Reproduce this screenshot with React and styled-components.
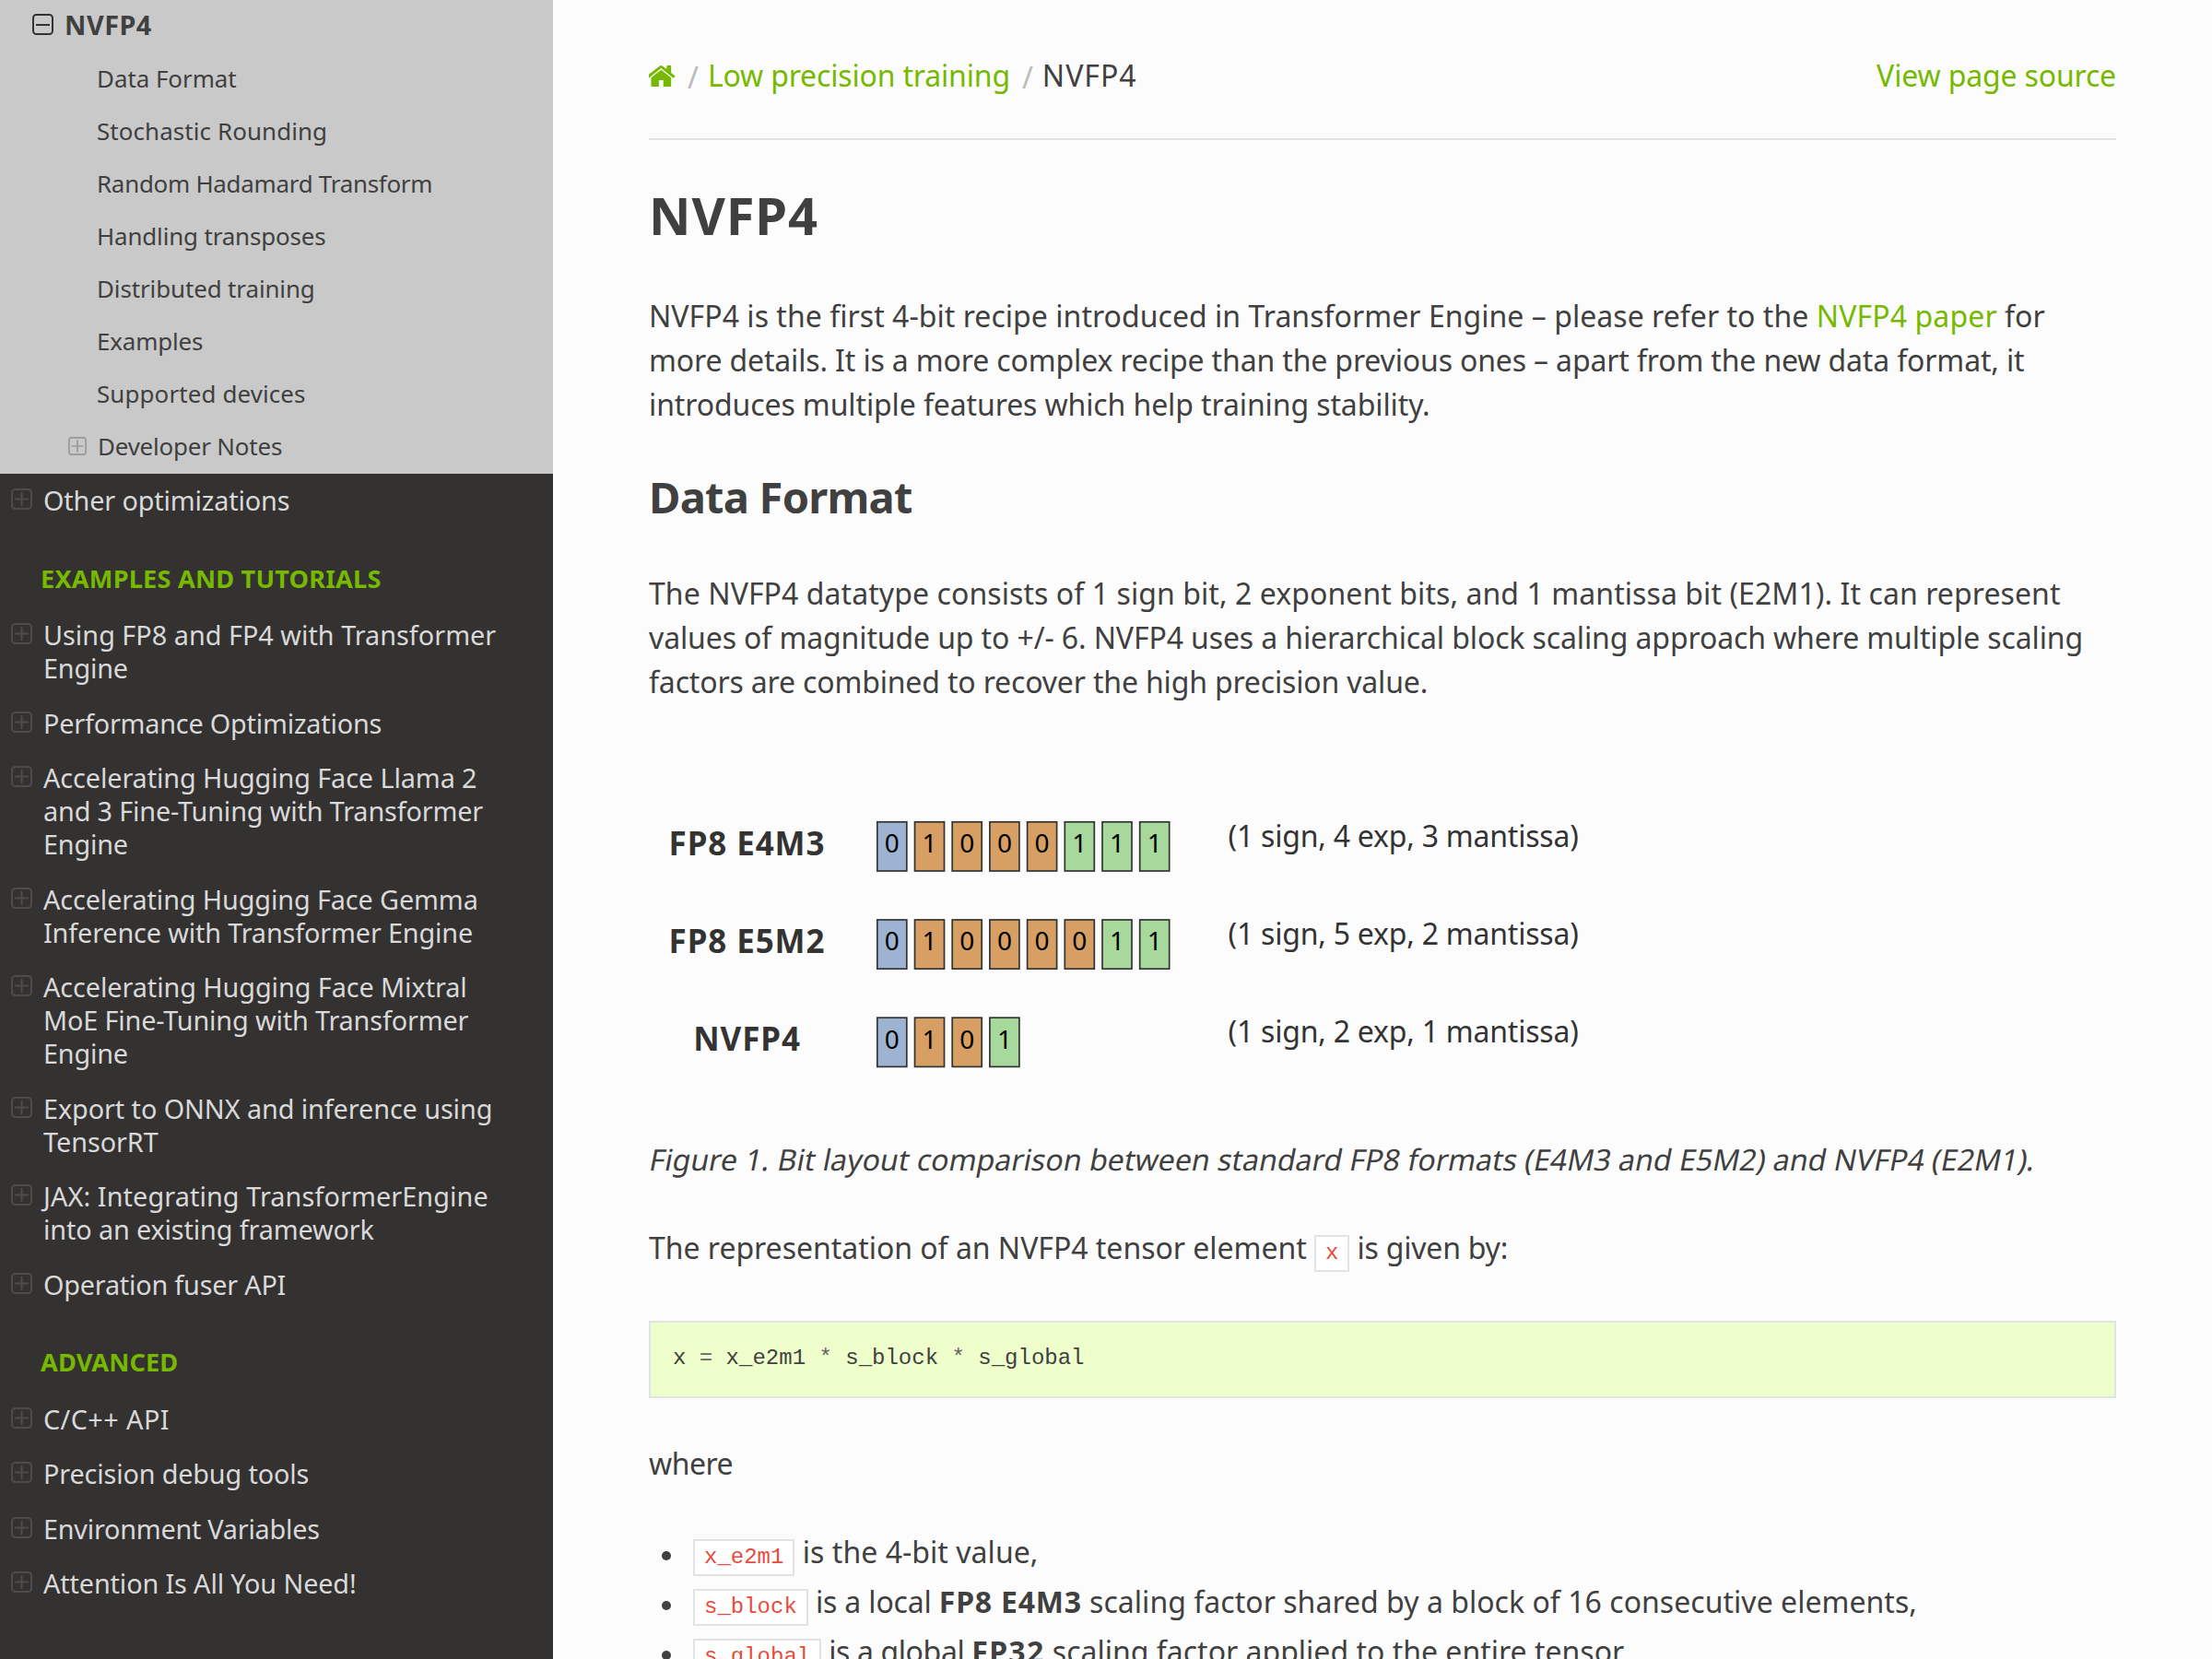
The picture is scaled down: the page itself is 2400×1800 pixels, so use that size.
import React from 'react'
import styled, { createGlobalStyle } from 'styled-components'

const GlobalStyle = createGlobalStyle`
    * {
        box-sizing: border-box;
    }
    body {
        margin: 0;
        background: #fcfcfc;
        color: #404040;
        font-family: 'Noto Sans', 'Liberation Sans', sans-serif;
        font-size: 32px;
        line-height: 48px;
    }
`

const Page = styled.div`
    display: flex;
    height: 1800px;
    overflow: hidden;
`

/* Sidebar */

const Sidebar = styled.nav`
    flex: none;
    width: 600px;
    background: #343131;
    color: #d9d9d9;
    font-size: 28.8px;
    line-height: 36px;
`
const CurrentSection = styled.div`
    background: #c9c9c9;
    color: #404040;
`
const MenuList = styled.ul`
    list-style: none;
    margin: 0;
    padding: 0;
`
const MenuItem = styled.li`
    display: flex;
    padding: 11.5px 0 12px 12px;
`
const CurrentItem = styled(MenuItem)`
    padding: 9.3px 0 12.9px 35px;
    font-weight: 700;
`
const SubItem = styled(MenuItem)`
    padding: 9px 0 11.97px ${(props) => (props.$expandable ? '74px' : '105px')};
    font-size: 25.92px;
`
const ToggleIcon = styled.svg`
    flex: none;
    width: ${(props) => props.$size}px;
    height: ${(props) => props.$size}px;
    margin: ${(props) => props.$top}px 12px 0 0;
    fill: none;
    stroke: ${(props) => props.$color};
    stroke-width: 2;
`
const MenuCaption = styled.p`
    margin: 22.3px 0 0;
    padding-left: 44px;
    color: #76b900;
    font-size: 27.2px;
    font-weight: 700;
    line-height: 64px;
    text-transform: uppercase;
`

const Line = styled.span`
    display: block;
    white-space: pre;
    letter-spacing: ${(props) => props.$ls || 0}px;
`
const Run = styled.span`
    white-space: pre;
    letter-spacing: ${(props) => props.$ls || 0}px;
`
const Bold = styled(Run)`
    font-weight: 700;
`
const Link = styled.a`
    color: #76b900;
    text-decoration: none;
    white-space: pre;
    letter-spacing: ${(props) => props.$ls || 0}px;
`

/* Content */

const Content = styled.main`
    flex: none;
    width: 1800px;
    padding: 58px 104px 0;
`
const Breadcrumbs = styled.div`
    display: flex;
    height: 94px;
    border-bottom: 2px solid #e1e4e5;
`
const HomeIcon = styled.svg`
    width: 29px;
    height: 23px;
    margin-top: 13px;
    fill: #76b900;
`
const Separator = styled.span`
    margin: 2px 10px 0 13px;
    color: #bbb;
`
const SourceLink = styled(Link)`
    margin-left: auto;
`
const Title = styled.h1`
    margin: 42.5px 0 0;
    font-size: 56px;
    line-height: 76px;
    letter-spacing: 0.9px;
`
const Heading = styled.h2`
    margin: 44.6px 0 0;
    font-size: 47px;
    line-height: 64px;
    letter-spacing: -0.75px;
`
const Paragraph = styled.p`
    margin: ${(props) => props.$top}px 0 0;
`
const Figure = styled.svg`
    display: block;
    width: 1592px;
    height: 320px;
    margin-top: 96.3px;
`
const Caption = styled.div`
    margin: 53.5px 0 0 -1px;
    transform: skewX(-11deg);
    transform-origin: 0 36px;
`
const Code = styled.code`
    padding: 4px 10px 5px;
    border: 2px solid #e1e4e5;
    background: #fff;
    color: #e74c3c;
    font-family: 'Liberation Mono', monospace;
    font-size: 24px;
`
const CodeBlock = styled.pre`
    height: 84px;
    margin: 48.5px 0 0;
    padding: 22px 24px;
    border: 2px solid #e1e4e5;
    background: #eeffcc;
    font-family: 'Liberation Mono', monospace;
    font-size: 24px;
    line-height: 34px;
`
const Operator = styled.span`
    color: #666;
`
const BulletList = styled.ul`
    list-style: none;
    margin: 45px 0 0;
    padding: 0;
`
const BulletItem = styled.li`
    display: flex;
    height: 54px;
    padding-top: 3px;
    white-space: pre;

    &::before {
        content: '';
        flex: none;
        width: 10px;
        height: 10px;
        margin: 23px 24px 0 14px;
        border-radius: 50%;
        background: #404040;
    }
`

const currentPages = [
    { text: 'Data Format', ls: -0.03 },
    { text: 'Stochastic Rounding', ls: 0.1 },
    { text: 'Random Hadamard Transform', ls: -0.26 },
    { text: 'Handling transposes', ls: -0.14 },
    { text: 'Distributed training', ls: -0.1 },
    { text: 'Examples', ls: -0.17 },
    { text: 'Supported devices', ls: 0.13 },
    { text: 'Developer Notes', ls: -0.18, expandable: true },
]

const otherPages = [[['Other optimizations', -0.15]]]

const tutorials = [
    [
        ['Using FP8 and FP4 with Transformer', 0.015],
        ['Engine', -0.2],
    ],
    [['Performance Optimizations', -0.2]],
    [
        ['Accelerating Hugging Face Llama 2', -0.095],
        ['and 3 Fine-Tuning with Transformer', -0.14],
        ['Engine', -0.2],
    ],
    [
        ['Accelerating Hugging Face Gemma', -0.11],
        ['Inference with Transformer Engine', -0.14],
    ],
    [
        ['Accelerating Hugging Face Mixtral', -0.07],
        ['MoE Fine-Tuning with Transformer', -0.14],
        ['Engine', -0.2],
    ],
    [
        ['Export to ONNX and inference using', -0.08],
        ['TensorRT', -0.05],
    ],
    [
        ['JAX: Integrating TransformerEngine', 0.1],
        ['into an existing framework', -0.13],
    ],
    [['Operation fuser API', -0.21]],
]

const advanced = [
    [['C/C++ API', 0.42]],
    [['Precision debug tools', -0.15]],
    [['Environment Variables', -0.24]],
    [['Attention Is All You Need!', -0.13]],
]

// one letter per bit: sign, exponent, mantissa
const formats = [
    { name: 'FP8 E4M3', bits: 'seeeemmm', values: '01000111', note: '(1 sign, 4 exp, 3 mantissa)' },
    { name: 'FP8 E5M2', bits: 'seeeeemm', values: '01000011', note: '(1 sign, 5 exp, 2 mantissa)' },
    { name: 'NVFP4', bits: 'seem', values: '0101', note: '(1 sign, 2 exp, 1 mantissa)' },
]

const bitColors = { s: '#9db3d1', e: '#d79f63', m: '#a6d99b' }

function Toggle({ open, size = 23, top = 5, color = '#4d4b4b' }) {
    return (
        <ToggleIcon viewBox="0 0 23 23" $size={size} $top={top} $color={color}>
            <rect x="1" y="1" width="21" height="21" rx="3.5" />
            <path d={open ? 'M4 12H19' : 'M4 11.5H19M11.5 4V19'} />
        </ToggleIcon>
    )
}

function Menu({ pages }) {
    return (
        <MenuList>
            {pages.map((lines) => (
                <MenuItem key={lines[0][0]}>
                    <Toggle />
                    <div>
                        {lines.map(([text, ls]) => (
                            <Line key={text} $ls={ls}>
                                {text}
                            </Line>
                        ))}
                    </div>
                </MenuItem>
            ))}
        </MenuList>
    )
}

function BitLayout() {
    return (
        <Figure viewBox="0 0 1592 320">
            {formats.map((format, row) => (
                <g key={format.name} transform={`translate(0 ${row * 106.2})`}>
                    <text
                        x="106.5"
                        y="67"
                        fontSize="35"
                        fontWeight="700"
                        letterSpacing="0.9"
                        textAnchor="middle"
                        fill="#333"
                    >
                        {format.name}
                    </text>
                    {format.values.split('').map((value, i) => (
                        <g key={i} transform={`translate(${247.8 + i * 40.7} 0)`}>
                            <rect
                                y="30.8"
                                width="32"
                                height="53.2"
                                fill={bitColors[format.bits[i]]}
                                stroke="#333"
                                strokeWidth="1.7"
                            />
                            <text x="16" y="64.3" fontSize="28" textAnchor="middle" fill="#000">
                                {value}
                            </text>
                        </g>
                    ))}
                    <text x="628.5" y="57.7" fontSize="32" letterSpacing="-0.22" fill="#333">
                        {format.note}
                    </text>
                </g>
            ))}
        </Figure>
    )
}

function App() {
    return (
        <Page>
            <GlobalStyle />
            <Sidebar>
                <CurrentSection>
                    <CurrentItem as="div">
                        <Toggle open color="#333" top={6} />
                        <Line $ls={0.5}>NVFP4</Line>
                    </CurrentItem>
                    <MenuList>
                        {currentPages.map((page) => (
                            <SubItem key={page.text} $expandable={page.expandable}>
                                {page.expandable && <Toggle size={20} top={8} color="#999" />}
                                <Line $ls={page.ls}>{page.text}</Line>
                            </SubItem>
                        ))}
                    </MenuList>
                </CurrentSection>
                <Menu pages={otherPages} />
                <MenuCaption>
                    <Line $ls={0.19}>Examples and Tutorials</Line>
                </MenuCaption>
                <Menu pages={tutorials} />
                <MenuCaption>
                    <Line $ls={0.1}>Advanced</Line>
                </MenuCaption>
                <Menu pages={advanced} />
            </Sidebar>
            <Content>
                <Breadcrumbs>
                    <HomeIcon viewBox="127 253 1538 1283" preserveAspectRatio="none">
                        <path d="M1408 992v480q0 26-19 45t-45 19h-384v-384h-256v384h-384q-26 0-45-19t-19-45v-480q0-1 .5-3t.5-3l575-474 575 474q1 2 1 6zm223-69l-62 74q-8 9-21 11h-3q-13 0-21-7l-692-577-692 577q-12 8-24 7-13-2-21-11l-62-74q-8-10-7-23.5t11-21.5l719-599q32-26 76-26t76 26l244 204v-195q0-14 9-23t23-9h192q14 0 23 9t9 23v408l219 182q10 8 11 21.5t-7 23.5z" />
                    </HomeIcon>
                    <Separator>/</Separator>
                    <Link $ls={-0.17}>Low precision training</Link>
                    <Separator>/</Separator>
                    <Run $ls={1}>NVFP4</Run>
                    <SourceLink $ls={-0.16}>View page source</SourceLink>
                </Breadcrumbs>

                <Title>NVFP4</Title>
                <Paragraph $top={48}>
                    <Line>
                        <Run $ls={0.037}>
                            {'NVFP4 is the first 4-bit recipe introduced in Transformer Engine – please refer to the '}
                        </Run>
                        <Link $ls={0.12}>NVFP4 paper</Link> for
                    </Line>
                    <Line $ls={-0.148}>
                        more details. It is a more complex recipe than the previous ones – apart from the new
                        data format, it
                    </Line>
                    <Line $ls={-0.11}>introduces multiple features which help training stability.</Line>
                </Paragraph>

                <Heading>Data Format</Heading>
                <Paragraph $top={49.2}>
                    <Line $ls={0.075}>
                        The NVFP4 datatype consists of 1 sign bit, 2 exponent bits, and 1 mantissa bit (E2M1). It
                        can represent
                    </Line>
                    <Line $ls={-0.12}>
                        values of magnitude up to +/- 6. NVFP4 uses a hierarchical block scaling approach where
                        multiple scaling
                    </Line>
                    <Line $ls={-0.165}>factors are combined to recover the high precision value.</Line>
                </Paragraph>

                <BitLayout />
                <Caption>
                    <Line $ls={0.06}>
                        Figure 1. Bit layout comparison between standard FP8 formats (E4M3 and E5M2) and NVFP4
                        (E2M1).
                    </Line>
                </Caption>

                <Paragraph $top={48}>
                    <Run $ls={-0.026}>{'The representation of an NVFP4 tensor element '}</Run>
                    <Code>x</Code>
                    <Run $ls={-0.22}> is given by:</Run>
                </Paragraph>
                <CodeBlock>
                    x <Operator>=</Operator> x_e2m1 <Operator>*</Operator> s_block <Operator>*</Operator>{' '}
                    s_global
                </CodeBlock>
                <Paragraph $top={47.6}>
                    <Run $ls={-0.5}>where</Run>
                </Paragraph>
                <BulletList>
                    <BulletItem>
                        <div>
                            <Code>x_e2m1</Code>
                            <Run $ls={0.04}> is the 4-bit value,</Run>
                        </div>
                    </BulletItem>
                    <BulletItem>
                        <div>
                            <Code>s_block</Code>
                            <Run $ls={-0.17}> is a local </Run>
                            <Bold $ls={0.77}>FP8 E4M3</Bold>
                            <Run $ls={0.03}> scaling factor shared by a block of 16 consecutive elements,</Run>
                        </div>
                    </BulletItem>
                    <BulletItem>
                        <div>
                            <Code>s_global</Code>
                            <Run $ls={-0.38}> is a global </Run>
                            <Bold $ls={1.3}>FP32</Bold>
                            <Run $ls={0}> scaling factor applied to the entire tensor</Run>
                        </div>
                    </BulletItem>
                </BulletList>
            </Content>
        </Page>
    )
}

export default App
